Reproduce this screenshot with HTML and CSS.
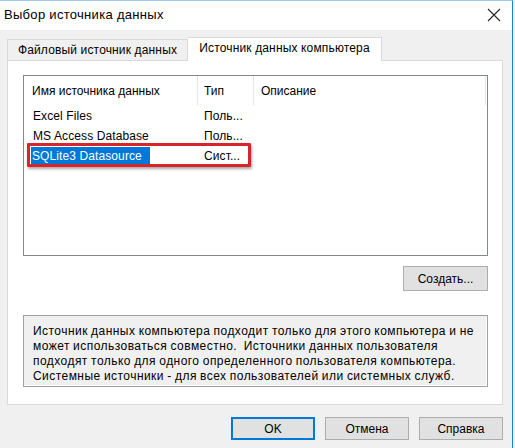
FILE: index.html
```html
<!DOCTYPE html>
<html lang="ru">
<head>
<meta charset="utf-8">
<title>Выбор источника данных</title>
<link rel="stylesheet" href="styles.css">
</head>
<body>
<div class="window">
  <div class="titlebar">
    <span class="title">Выбор источника данных</span>
    <svg class="close" width="14" height="14" viewBox="0 0 14 14"><path d="M1 1 L13 13 M13 1 L1 13" stroke="#222" stroke-width="1.1" fill="none"/></svg>
  </div>
  <div class="body">
    <div class="tabs">
      <div class="tab">Файловый источник данных</div>
      <div class="tab active">Источник данных компьютера</div>
    </div>
    <div class="panel">
      <div class="listview">
        <div class="lv-header">
          <div class="col c1">Имя источника данных</div>
          <div class="col c2">Тип</div>
          <div class="col c3">Описание</div>
        </div>
        <div class="lv-row">
          <div class="col c1"><span>Excel Files</span></div>
          <div class="col c2">Поль...</div>
          <div class="col c3"></div>
        </div>
        <div class="lv-row">
          <div class="col c1"><span>MS Access Database</span></div>
          <div class="col c2">Поль...</div>
          <div class="col c3"></div>
        </div>
        <div class="lv-row">
          <div class="col c1"><span class="selected">SQLite3 Datasource</span></div>
          <div class="col c2">Сист...</div>
          <div class="col c3"></div>
        </div>
        <div class="highlight"></div>
      </div>
      <div class="create-row">
        <button class="btn create">Создать...</button>
      </div>
      <div class="desc">Источник данных компьютера подходит только для этого компьютера и не<br>может использоваться совместно.&nbsp; Источники данных пользователя<br>подходят только для одного определенного пользователя компьютера.<br>Системные источники - для всех пользователей или системных служб.</div>
    </div>
    <div class="buttons">
      <button class="btn default">OK</button>
      <button class="btn">Отмена</button>
      <button class="btn">Справка</button>
    </div>
  </div>
</div>
</body>
</html>
```
FILE: styles.css
```css
* { box-sizing: border-box; }
html, body {
  margin: 0;
  padding: 0;
  background: #f0f0f0;
  font-family: "Liberation Sans", Arial, sans-serif;
  font-size: 12px;
  color: #000;
}
.window {
  width: 513px;
  height: 448px;
  border-right: 1px solid #1a7fd6;
  border-top: 1px solid #9ec9ef;
  background: #f0f0f0;
  overflow: hidden;
}
.titlebar {
  height: 29px;
  background: #fff;
  display: flex;
  align-items: center;
  justify-content: space-between;
  padding: 0 11px 0 4px;
}
.title { font-size: 13px; letter-spacing: 0.3px; padding-bottom: 2px; }
.close { display: block; margin-bottom: 2px; }
.body {
  padding: 7px 9px 0 7px;
}
.tabs {
  display: flex;
  align-items: flex-end;
  height: 23px;
  position: relative;
  z-index: 1;
}
.tab {
  height: 21px;
  padding: 0 5px;
  border: 1px solid #d9d9d9;
  border-bottom: none;
  background: #f0f0f0;
  display: flex;
  align-items: center;
  width: 181px;
  justify-content: center;
  letter-spacing: 0.15px;
}
.tab.active {
  height: 24px;
  margin-bottom: -1px;
  background: #fff;
  width: 194px;
  border-left: none;
  padding-bottom: 3px;
}
.panel {
  background: #fff;
  border: 1px solid #d9d9d9;
  height: 345px;
  padding: 14px 14px 0 15px;
}
.listview {
  position: relative;
  height: 181px;
  border: 1px solid #828790;
  background: #fff;
}
.lv-header {
  display: flex;
  height: 29px;
  align-items: stretch;
  margin-bottom: 1px;
}
.lv-header .col {
  display: flex;
  align-items: center;
  border-right: 1px solid #e5e5e5;
}
.col { flex: none; white-space: nowrap; overflow: hidden; }
.c1 { width: 174px; padding-left: 8px; }
.c2 { width: 56px; padding-left: 6px; }
.c3 { width: 232px; padding-left: 7px; }
.lv-row {
  display: flex;
  height: 20px;
  align-items: center;
}
.lv-row .col { line-height: 18px; letter-spacing: 0.1px; }
.lv-row .c1 span { padding: 0 1px; display: inline-block; }
.lv-row .c1 .selected { background: #0078d7; color: #fff; margin-left: -1px; width: 119px; }
.highlight {
  position: absolute;
  left: 3px;
  top: 67px;
  width: 224px;
  height: 24px;
  border: 3px solid #d8242b;
  border-radius: 1px;
  box-shadow: 1px 2px 3px rgba(0,0,0,0.35);
}
.create-row {
  display: flex;
  justify-content: flex-end;
  margin-top: 10px;
}
.btn {
  font: inherit;
  font-size: 12px;
  color: #000;
  background: #e1e1e1;
  border: 1px solid #adadad;
  height: 23px;
  width: 84px;
  padding: 0;
  margin: 0;
}
.create { height: 25px; width: 85px; }
.desc {
  margin-top: 24px;
  border: 1px solid #a0a0a0;
  box-shadow: inset -1px -1px 0 #fff;
  background: #f0f0f0;
  height: 72px;
  padding: 8px 9px 0 9px;
  line-height: 15px;
  white-space: nowrap;
  letter-spacing: 0.45px;
  word-spacing: -0.5px;
}
.buttons {
  display: flex;
  justify-content: flex-end;
  gap: 10px;
  margin-top: 12px;
}
.btn.default { border: 2px solid #0078d7; }
```
